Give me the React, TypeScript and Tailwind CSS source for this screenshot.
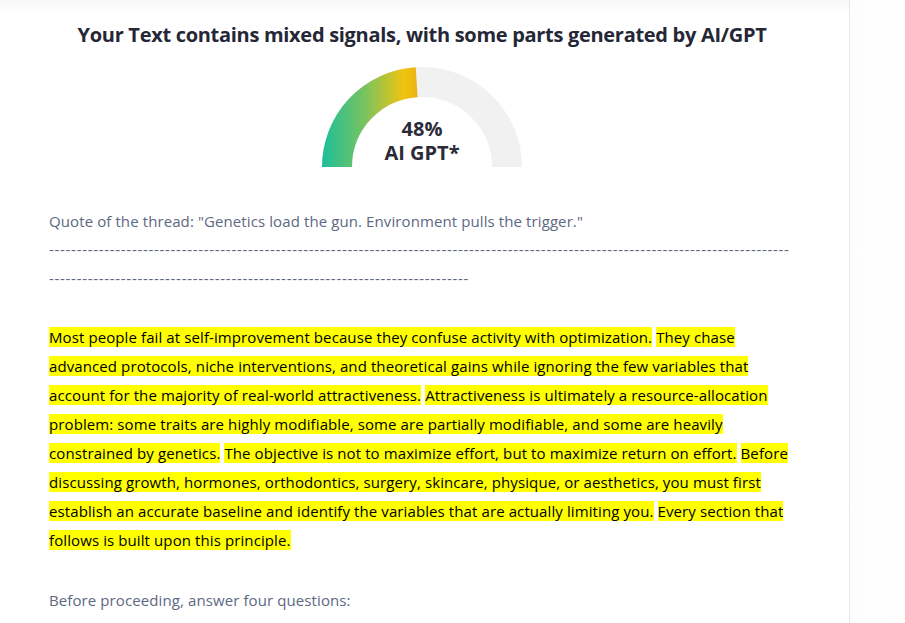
import React from "react";

const SENTENCES = [
  "Most people fail at self-improvement because they confuse activity with optimization.",
  "They chase advanced protocols, niche interventions, and theoretical gains while ignoring the few variables that account for the majority of real-world attractiveness.",
  "Attractiveness is ultimately a resource-allocation problem: some traits are highly modifiable, some are partially modifiable, and some are heavily constrained by genetics.",
  "The objective is not to maximize effort, but to maximize return on effort.",
  "Before discussing growth, hormones, orthodontics, surgery, skincare, physique, or aesthetics, you must first establish an accurate baseline and identify the variables that are actually limiting you.",
  "Every section that follows is built upon this principle.",
];

const DASHES = "-".repeat(210);

function Gauge({ percent }: { percent: number }) {
  const r = 85;
  const a = (percent / 100) * Math.PI;
  const ex = 100 - r * Math.cos(a);
  const ey = 100 - r * Math.sin(a);
  return (
    <div className="relative h-[101px] w-[200px]">
      <svg width="200" height="101" viewBox="0 0 200 101">
        <defs>
          <linearGradient id="gauge-fill" gradientUnits="userSpaceOnUse" x1="0" y1="0" x2={ex + 15} y2="0">
            <stop offset="0" stopColor="#1cbf9a" />
            <stop offset="0.4" stopColor="#7cc35e" />
            <stop offset="0.75" stopColor="#f1c40f" />
            <stop offset="1" stopColor="#e39e1e" />
          </linearGradient>
        </defs>
        <path d={`M 15 100 A ${r} ${r} 0 0 1 185 100`} fill="none" stroke="#f1f1f1" strokeWidth="30" />
        <path d={`M 15 100 A ${r} ${r} 0 0 1 ${ex} ${ey}`} fill="none" stroke="url(#gauge-fill)" strokeWidth="30" />
      </svg>
      <div className="absolute inset-x-0 top-[50px] flex flex-col items-center text-[20px] font-bold leading-[24px] text-[#2b2b38]">
        <span>{percent}%</span>
        <span>AI GPT*</span>
      </div>
    </div>
  );
}

export default function App() {
  return (
    <div
      className="flex min-h-screen bg-gradient-to-r from-[#f1f1f6] to-[#fefefe]"
      style={{ fontFamily: '"Open Sans", "Noto Sans", sans-serif' }}
    >
      <div className="w-[850px] shrink-0 border-r border-[#e4e4f0] bg-white pl-[49px]">
        <div className="-ml-[49px] h-3 bg-gradient-to-b from-[#f8f8fa] to-white" />
        <div className="w-[746px]">
          <h1 className="mt-[8px] text-center text-[20px] font-bold leading-[30px] tracking-[-0.3px] text-[#252736]">
            Your Text contains mixed signals, with some parts generated by AI/GPT
          </h1>
          <div className="mt-[17px] flex justify-center">
            <Gauge percent={48} />
          </div>
          <p className="mt-[39px] break-all text-[15px] leading-[29px] tracking-[0.1px] text-[#5d6882]">
            <span className="break-normal">
              Quote of the thread: "Genetics load the gun. Environment pulls the trigger."
            </span>
            <br />
            <span className="relative -top-[1px] tracking-[0.7px]">{DASHES}</span>
          </p>
          <p className="mt-[29px] text-[15px] leading-[29px] tracking-[0.1px] text-black">
            {SENTENCES.map((s, i) => (
              <React.Fragment key={i}>
                <span className="bg-[#ffff00]">{s}</span>
                {i < SENTENCES.length - 1 ? " " : ""}
              </React.Fragment>
            ))}
          </p>
          <p className="mt-[31px] pb-8 text-[15px] leading-[29px] tracking-[0.1px] text-[#5d6882]">
            Before proceeding, answer four questions:
          </p>
        </div>
      </div>
    </div>
  );
}
